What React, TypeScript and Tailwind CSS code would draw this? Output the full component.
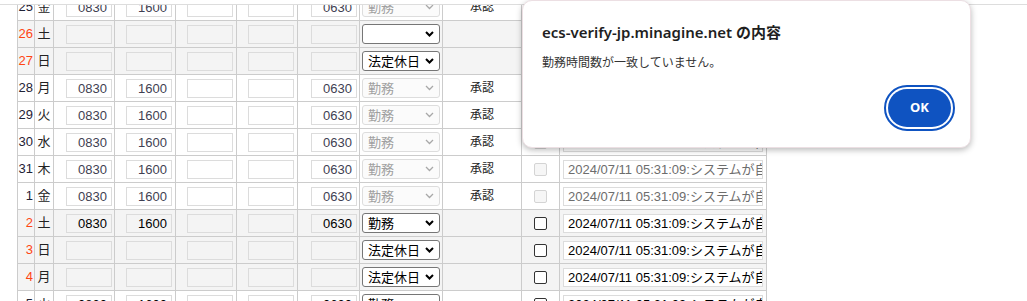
import React from "react";

type Row = {
  d: string;
  w: string;
  red?: boolean;
  grey?: boolean;
  s?: string;
  e?: string;
  o?: string;
  on?: boolean;
  sel: string;
  selOn?: boolean;
  ok?: boolean;
  cbOn?: boolean;
  txtOn?: boolean;
};

const LOG = "2024/07/11 05:31:09:システムが自動承認しました";

const rows: Row[] = [
  { d: "25", w: "金", s: "0830", e: "1600", o: "0630", sel: "勤務", ok: true },
  { d: "26", w: "土", red: true, grey: true, sel: "", selOn: true, cbOn: true, txtOn: true },
  { d: "27", w: "日", red: true, grey: true, sel: "法定休日", selOn: true, cbOn: true, txtOn: true },
  { d: "28", w: "月", s: "0830", e: "1600", o: "0630", sel: "勤務", ok: true },
  { d: "29", w: "火", s: "0830", e: "1600", o: "0630", sel: "勤務", ok: true },
  { d: "30", w: "水", s: "0830", e: "1600", o: "0630", sel: "勤務", ok: true },
  { d: "31", w: "木", s: "0830", e: "1600", o: "0630", sel: "勤務", ok: true },
  { d: "1", w: "金", s: "0830", e: "1600", o: "0630", sel: "勤務", ok: true },
  { d: "2", w: "土", red: true, grey: true, s: "0830", e: "1600", o: "0630", on: true, sel: "勤務", selOn: true, cbOn: true, txtOn: true },
  { d: "3", w: "日", red: true, grey: true, sel: "法定休日", selOn: true, cbOn: true, txtOn: true },
  { d: "4", w: "月", red: true, grey: true, sel: "法定休日", selOn: true, cbOn: true, txtOn: true },
  { d: "5", w: "火", s: "0830", e: "1600", o: "0630", on: true, sel: "勤務", selOn: true, cbOn: true, txtOn: true },
];

const cell = "border-r border-[#cccccc] flex items-center";

function Box({ v, grey, on }: { v?: string; grey?: boolean; on?: boolean }) {
  return (
    <div
      className={`w-[46px] h-[19px] border border-[#dcdcdc] flex items-center justify-end pr-[4px] text-[13px] leading-none ${
        grey ? "bg-[#f4f4f4]" : "bg-white"
      } ${on ? "text-black" : "text-[#3f3f52]"}`}
    >
      {v}
    </div>
  );
}

function Chevron({ on }: { on?: boolean }) {
  return (
    <svg width="9" height="6" viewBox="0 0 9 6" className="shrink-0">
      <polyline
        points="1,1 4.5,4.5 8,1"
        fill="none"
        stroke={on ? "#000" : "#a8a8a8"}
        strokeWidth={on ? 2 : 1.3}
      />
    </svg>
  );
}

function Select({ v, on }: { v: string; on?: boolean }) {
  return (
    <div
      className={`w-[78px] h-[20px] rounded-[3px] border flex items-center justify-between pl-[5px] pr-[5px] text-[13px] leading-none ${
        on ? "border-[#767676] bg-white text-black" : "border-[#dddddd] bg-[#fbfbfb] text-[#a0a0a0]"
      }`}
    >
      <span>{v}</span>
      <Chevron on={on} />
    </div>
  );
}

export default function App() {
  return (
    <div
      className="relative w-[1027px] h-[301px] overflow-hidden bg-white text-[#222]"
      style={{ fontFamily: '"Liberation Sans", "Noto Sans CJK JP", sans-serif' }}
    >
      <div className="h-[5px] border-b border-[#dddddd]" />
      <div className="h-[296px] overflow-hidden pl-[17px]">
        <div className="mt-[-11px] w-[750px] border-l border-[#cccccc]">
          {rows.map((r) => (
            <div
              key={r.d}
              className={`grid grid-cols-[17px_19px_61px_61px_61px_61px_62px_83px_79px_38px_207px] h-[27px] border-b border-[#cccccc] ${
                r.grey ? "bg-[#f4f4f4]" : "bg-white"
              }`}
            >
              <div
                className={`${cell} justify-end pr-[1px] text-[13px] ${r.red ? "text-[#ff4513]" : "text-[#1f2235]"}`}
                style={{ fontFamily: '"Liberation Sans Narrow", "Liberation Sans", sans-serif' }}
              >
                {r.d}
              </div>
              <div className={`${cell} justify-center text-[13px] text-[#222]`}>{r.w}</div>
              <div className={`${cell} justify-end pr-[2px]`}>
                <Box v={r.s} grey={r.grey} on={r.on} />
              </div>
              <div className={`${cell} justify-end pr-[3px]`}>
                <Box v={r.e} grey={r.grey} on={r.on} />
              </div>
              <div className={`${cell} justify-end pr-[3px]`}>
                <Box grey={r.grey} />
              </div>
              <div className={`${cell} justify-end pr-[3px]`}>
                <Box grey={r.grey} />
              </div>
              <div className={`${cell} justify-end pr-[2px]`}>
                <Box v={r.o} grey={r.grey} on={r.on} />
              </div>
              <div className={`${cell} justify-center`}>
                <Select v={r.sel} on={r.selOn} />
              </div>
              <div className={`${cell} justify-center text-[12px] text-[#222]`}>{r.ok ? "承認" : ""}</div>
              <div className={`${cell} justify-center`}>
                <div
                  className={`w-[13px] h-[13px] rounded-[2px] border ${
                    r.cbOn ? "border-[#333333] bg-white" : "border-[#d4d4d4] bg-[#f6f6f6]"
                  }`}
                />
              </div>
              <div className={`${cell} justify-center`}>
                <div
                  className={`w-[200px] h-[19px] border border-[#dcdcdc] bg-white overflow-hidden whitespace-nowrap pl-[4px] text-[13px] leading-[17px] ${
                    r.txtOn ? "text-black" : "text-[#6d6d6d]"
                  }`}
                >
                  {LOG}
                </div>
              </div>
            </div>
          ))}
        </div>
      </div>

      <div
        className="absolute left-[522px] top-0 w-[449px] h-[148px] rounded-[10px] border border-[#ecdfe3] bg-white shadow-[0_2px_6px_rgba(0,0,0,0.28)] pl-[19px] pr-[15px] pt-[21px]"
        style={{ fontFamily: '"Noto Sans", "Noto Sans CJK JP", sans-serif' }}
      >
        <div className="text-[15px] leading-[20px] font-semibold text-[#1f1f1f]">
          ecs-verify-jp.minagine.net の内容
        </div>
        <div className="mt-[12px] text-[12px] leading-[18px] text-[#333]">勤務時間数が一致していません。</div>
        <div className="mt-[13px] flex justify-end">
          <div className="rounded-full border-2 border-[#0f53c1] bg-white p-[2px]">
            <div className="w-[63px] h-[38px] rounded-full bg-[#0f53c1] flex items-center justify-center text-[13px] font-bold text-white">
              OK
            </div>
          </div>
        </div>
      </div>
    </div>
  );
}
